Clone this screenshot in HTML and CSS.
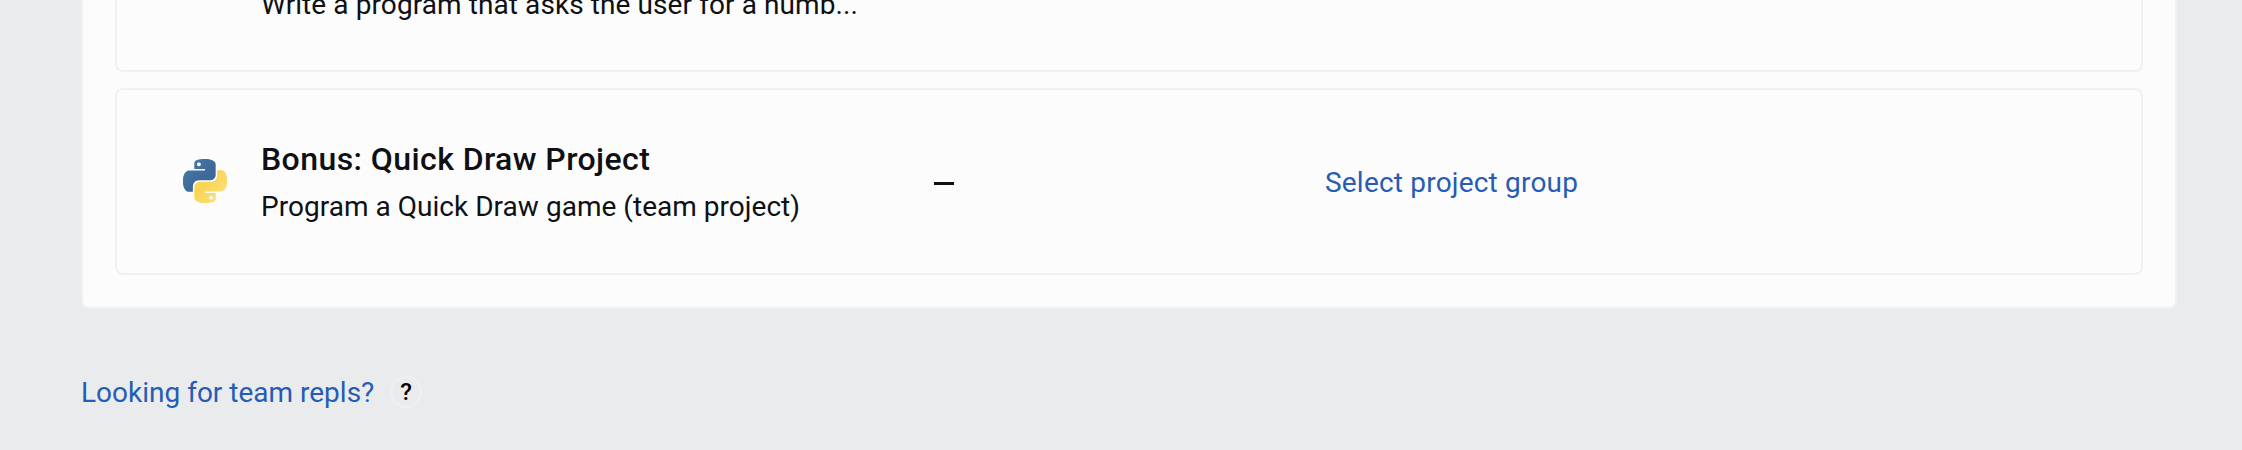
FILE: index.html
```html
<!DOCTYPE html>
<html lang="en">
<head>
<meta charset="utf-8">
<title>Projects</title>
<link rel="stylesheet" href="styles.css">
</head>
<body>
<main class="page">
  <section class="card">
    <article class="row row-clipped">
      <div class="info"><p class="desc desc-long">Write a program that asks the user for a numb...</p></div>
    </article>
    <article class="row">
      <svg class="logo" viewBox="0 0 24 24" aria-hidden="true">
        <defs>
          <linearGradient id="blue" x1="0" y1="0" x2="1" y2="1"><stop offset="0" stop-color="#4b7fac"/><stop offset=".6" stop-color="#3d6897"/></linearGradient>
          <linearGradient id="yellow" x1="0" y1="0" x2="1" y2="1"><stop offset="0" stop-color="#fbe287"/><stop offset=".6" stop-color="#f9d557"/></linearGradient>
          <path id="snake" d="M14.25.18l.9.2.73.26.59.3.45.32.34.34.25.34.16.33.1.3.04.26.02.2-.01.13V8.5l-.05.63-.13.55-.21.46-.26.38-.3.31-.33.25-.35.19-.35.14-.33.1-.3.07-.26.04-.21.02H8.77l-.69.05-.59.14-.5.22-.41.27-.33.32-.27.35-.2.36-.15.37-.1.35-.07.32-.04.27-.02.21v3.06H3.17l-.21-.03-.28-.07-.32-.12-.35-.18-.36-.26-.36-.36-.35-.46-.32-.59-.28-.73-.21-.88-.14-1.05-.05-1.23.06-1.22.16-1.04.24-.87.32-.71.36-.57.4-.44.42-.33.42-.24.4-.16.36-.1.32-.05.24-.01h.16l.06.01h8.16v-.83H6.18l-.01-2.75-.02-.37.05-.34.11-.31.17-.28.25-.26.31-.23.38-.2.44-.18.51-.15.58-.12.64-.1.71-.06.77-.04.84-.02 1.27.05zm-6.3 1.98l-.23.33-.08.41.08.41.23.34.33.22.41.09.41-.09.33-.22.23-.34.08-.41-.08-.41-.23-.33-.33-.22-.41-.09-.41.09z"/>
        </defs>
        <use href="#snake" fill="url(#blue)"/>
        <use href="#snake" fill="url(#yellow)" transform="rotate(180 12 12)"/>
      </svg>
      <div class="info">
        <h2 class="title">Bonus: Quick Draw Project</h2>
        <p class="desc">Program a Quick Draw game (team project)</p>
      </div>
      <div class="status"><span class="dash"></span></div>
      <a class="link select">Select project group</a>
    </article>
  </section>
  <footer class="footer">
    <a class="link looking">Looking for team repls?</a>
    <span class="help">?</span>
  </footer>
</main>
</body>
</html>
```
FILE: styles.css
```css
* { box-sizing: border-box; }
body { margin: 0; height: 450px; overflow: hidden; background: #eaebed; color: #0e1014; font: 28px/40px Roboto, sans-serif; }
.page { padding: 0 65px 0 81px; }
.card { border: 2px solid #f0f1f2; border-top: 0; border-radius: 0 0 8px 8px; background: #fcfcfc; padding: 0 32px 32px; display: flex; flex-direction: column; gap: 16px; }
.row { height: 187px; border: 2px solid #f0f0f1; border-radius: 8px; padding-left: 66px; display: flex; align-items: center; }
.row-clipped { height: 72px; border-top: 0; border-radius: 0 0 8px 8px; padding-left: 144px; align-items: flex-start; }
.row-clipped .info { margin-top: -15px; }
.logo { width: 44px; height: 44px; flex: none; margin: 0 34px 2px 0; }
.info { width: 673px; flex: none; }
.title, .desc { margin: 0; white-space: nowrap; }
.desc { letter-spacing: .03px; }
.desc-long { letter-spacing: .09px; }
.title { font-size: 32px; line-height: 46px; font-weight: 500; letter-spacing: .42px; padding-bottom: 5px; }
.status { width: 391px; flex: none; display: flex; }
.dash { width: 20px; height: 3px; background: #0e1014; margin-top: 4px; }
.link { color: #265cb5; white-space: nowrap; }
.select { letter-spacing: .2px; padding-top: 2px; }
.footer { display: flex; align-items: center; margin-top: 63px; gap: 16px; height: 40px; }
.looking { width: 293px; padding-top: 2px; }
.help { width: 32px; height: 32px; border: 2px solid #f0f0f1; border-radius: 50%; color: #000; font-size: 24px; line-height: 28px; font-weight: 500; text-align: center; }
```
